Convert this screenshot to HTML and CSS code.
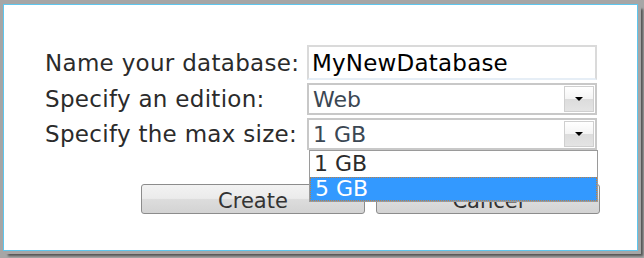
FILE: index.html
```html
<!DOCTYPE html>
<html>
<head>
<meta charset="utf-8">
<link rel="stylesheet" href="styles.css">
</head>
<body>
<div class="frame">
  <div class="form">
    <label class="label">Name your database:</label>
    <div class="input">MyNewDatabase</div>
    <label class="label">Specify an edition:</label>
    <div class="select"><span class="value">Web</span><span class="btn"><span class="tri"></span></span></div>
    <label class="label">Specify the max size:</label>
    <div class="select sel3"><span class="value">1 GB</span><span class="btn"><span class="tri"></span></span>
      <div class="list">
        <div class="opt">1 GB</div>
        <div class="opt active">5 GB</div>
      </div>
    </div>
  </div>
  <div class="actions">
    <button class="button">Create</button>
    <button class="button">Cancel</button>
  </div>
</div>
</body>
</html>
```

FILE: styles.css
```css
html, body { margin: 0; padding: 0; }
body {
  width: 644px;
  height: 258px;
  background: #a6a6a6;
  overflow: hidden;
  font-family: "DejaVu Sans", Verdana, sans-serif;
}
.frame {
  position: relative;
  margin: 4px 0 0 3px;
  width: 633px;
  height: 245px;
  background: #fff;
  border: 1px solid #5ec6ee;
  box-shadow: 3px 3px 0 #a6a6a6, 5px 5px 2px #555;
  box-sizing: content-box;
}
.form {
  display: grid;
  grid-template-columns: 262px 290px;
  grid-template-rows: 35px 32px 32px;
  row-gap: 3px;
  padding: 40px 0 0 41px;
}
.label {
  display: flex;
  align-items: center;
  font-size: 23px;
  color: #2b2b2b;
  letter-spacing: 0.3px;
  white-space: nowrap;
}
.input {
  border: 2px solid #dadada;
  border-bottom-color: #e6eef6;
  display: flex;
  align-items: center;
  padding-left: 3px;
  font-size: 23px;
  letter-spacing: 0.2px;
  color: #000;
}
.select {
  position: relative;
  border: 2px solid #c8c8c8;
  display: flex;
  align-items: center;
  font-size: 22px;
  color: #3b4753;
}
.value { flex: 1; padding-left: 4px; }
.btn {
  width: 28px;
  align-self: stretch;
  margin: 1px;
  border: 1px solid #cfcfcf;
  background: linear-gradient(#ffffff 0%, #f4f4f4 50%, #dcdcdc 51%, #e4e4e4 100%);
  display: flex;
  align-items: center;
  justify-content: center;
}
.tri {
  width: 0; height: 0;
  border-left: 4px solid transparent;
  border-right: 4px solid transparent;
  border-top: 4px solid #000;
}
.list {
  position: absolute;
  left: 0;
  top: 30px;
  width: 287px;
  background: #fff;
  border: 1px solid #9a9a9a;
  z-index: 2;
}
.opt {
  height: 26px;
  line-height: 26px;
  padding-left: 4px;
  font-size: 22px;
  color: #2b2b2b;
}
.opt.active {
  height: 22px;
  line-height: 22px;
  background: #3399ff;
  color: #fff;
  border: 1px dotted #c08040;
}
.actions {
  display: flex;
  gap: 11px;
  padding: 34px 0 0 137px;
}
.button {
  width: 224px;
  height: 30px;
  border: 1px solid #8c8c8c;
  border-radius: 3px;
  background: linear-gradient(#f2f2f2 0%, #ebebeb 48%, #dddddd 50%, #d3d3d3 100%);
  font-family: "DejaVu Sans", Verdana, sans-serif;
  font-size: 21px;
  color: #333;
  padding: 3px 0 0;
  line-height: 26px;
}
```
